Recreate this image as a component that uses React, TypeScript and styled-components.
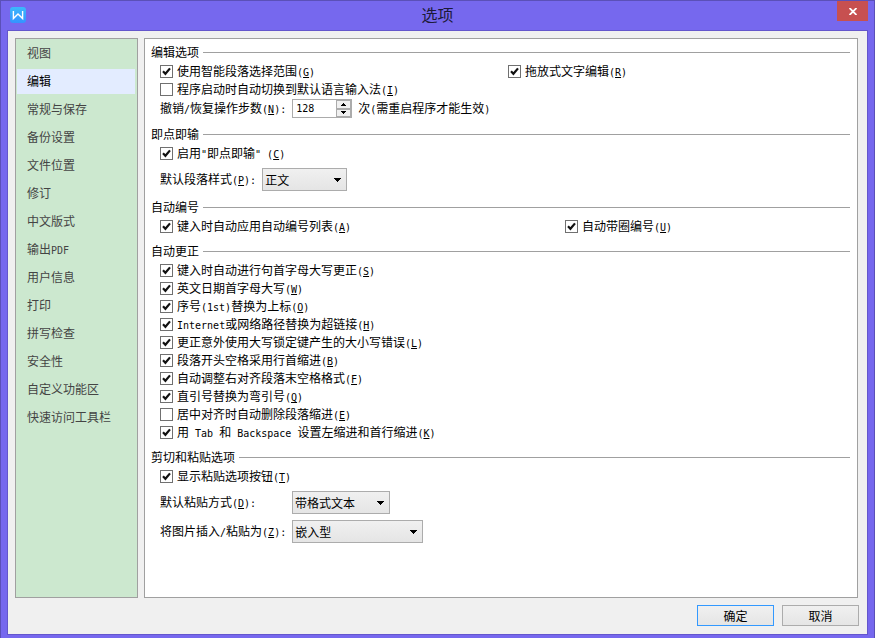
import React, { useId, useState } from "react";
import styled, { createGlobalStyle } from "styled-components";

const cjk = `"Noto Sans CJK SC", "Noto Sans", sans-serif`;
const mono = `"DejaVu Sans Mono", "Liberation Mono", monospace`;
const line = "#a0a0a0";

const GlobalStyle = createGlobalStyle`
  * { box-sizing: border-box; }
  body { margin: 0; color: #000; font-family: ${cjk}; font-size: 12px; line-height: 15px; }
  button, input, select { font: inherit; color: inherit; }
`;

const Window = styled.div`
  display: flex;
  flex-direction: column;
  min-height: 100vh;
  padding: 0 6px 3px;
  background: #7668ee;
  border: 1px solid #5b50b8;
  border-bottom: 0;
`;

const TitleBar = styled.header`
  display: grid;
  grid-template-columns: 31px 1fr 31px;
  height: 29px;
`;

const Logo = styled.svg`
  width: 16px;
  height: 16px;
  margin: 6px 3px;
`;

const Title = styled.h1`
  margin: 0;
  color: #1c1a38;
  font-size: 16px;
  font-weight: 400;
  line-height: 26px;
  text-align: center;
`;

const CloseButton = styled.button`
  display: grid;
  place-items: center;
  width: 31px;
  height: 20px;
  padding: 0;
  background: #c75050;
  border: 0;
`;

const Client = styled.div`
  display: flex;
  flex: 1;
  flex-direction: column;
  padding: 7px 9px 8px 7px;
  background: #f0f0f0;
  border: 1px solid #6456cc;
`;

const Body = styled.div`
  display: flex;
  flex: 1;
  gap: 6px;
`;

const Sidebar = styled.nav`
  display: flex;
  flex: 0 0 123px;
  flex-direction: column;
  gap: 3px;
  padding: 2px 2px 2px 1px;
  background: #cce8cf;
  border: 1px solid ${line};
`;

const NavItem = styled.button<{ $active: boolean }>`
  display: flex;
  align-items: center;
  height: 25px;
  padding: 0 10px;
  color: ${(p) => (p.$active ? "#000" : "#444")};
  white-space: nowrap;
  background: ${(p) => (p.$active ? "#e3ecff" : "transparent")};
  border: 0;
`;

const Panel = styled.main`
  display: flex;
  flex: 1;
  flex-direction: column;
  gap: 8px;
  padding: 5px 7px 5px 6px;
  background: #fff;
  border: 1px solid ${line};
`;

const Section = styled.section`
  display: flex;
  flex-direction: column;
  gap: 2px;
`;

const Heading = styled.h2`
  display: flex;
  gap: 4px;
  align-items: center;
  margin: 0;
  font-size: 12px;
  font-weight: 400;

  &::after {
    flex: 1;
    height: 1px;
    background: ${line};
    content: "";
  }
`;

const Rows = styled.div<{ $gap?: number }>`
  display: flex;
  flex-direction: column;
  gap: ${(p) => p.$gap ?? 0}px;
  padding-left: 9px;
`;

const Columns = styled.div<{ $split: string }>`
  display: grid;
  grid-template-columns: ${(p) => p.$split};
`;

const CheckLabel = styled.label`
  display: flex;
  gap: 4px;
  align-items: center;
  width: fit-content;
  height: 17px;
`;

const CheckMark = styled.span`
  display: grid;
  width: 13px;
  height: 13px;

  > * { grid-area: 1 / 1; }
  > svg { pointer-events: none; visibility: hidden; }
  > input:checked + svg { visibility: visible; }
`;

const CheckInput = styled.input`
  width: 13px;
  height: 13px;
  margin: 0;
  appearance: none;
  background: #fff;
  border: 1px solid #707070;
`;

const Field = styled.div`
  display: flex;
  gap: 6px;
  align-items: center;
`;

const FieldLabel = styled.label<{ $wide?: boolean }>`
  display: flex;
  min-width: ${(p) => (p.$wide ? "126px" : "96px")};
`;

const TextRun = styled.span`
  display: block;
  padding-bottom: 2px;
  white-space: pre;
`;

const Latin = styled.span`
  font-family: ${mono};
  font-size: 10px;
  line-height: 1;
`;

const Spinner = styled.div`
  display: flex;
  width: 60px;
  height: 19px;
  background: #fff;
  border: 1px solid #ababab;
`;

const SpinInput = styled.input`
  flex: 1;
  min-width: 0;
  padding: 0 3px;
  font-family: ${mono};
  font-size: 10px;
  background: transparent;
  border: 0;
`;

const SpinButtons = styled.div`
  display: grid;
  grid-template-rows: 1fr 1fr;
  width: 15px;
`;

const SpinButton = styled.button`
  display: grid;
  place-items: center;
  padding: 0;
  background: #f0f0f0;
  border: 1px solid #ababab;
`;

const SelectBox = styled.div<{ $width: number }>`
  display: grid;
  align-items: center;
  width: ${(p) => p.$width}px;
  height: 23px;

  > * { grid-area: 1 / 1; }
  > svg { justify-self: end; margin-right: 6px; pointer-events: none; }
`;

const Select = styled.select`
  width: 100%;
  height: 23px;
  padding: 0 18px 0 2px;
  appearance: none;
  background: linear-gradient(#f0f0f0, #e5e5e5);
  border: 1px solid #acacac;
  border-radius: 0;
`;

const Footer = styled.footer`
  display: flex;
  gap: 8px;
  justify-content: flex-end;
  margin: 7px -1px 0 0;
`;

const PushButton = styled.button<{ $primary?: boolean }>`
  width: 77px;
  height: 21px;
  padding: 0;
  background: linear-gradient(#f0f0f0, #e5e5e5);
  border: 1px solid ${(p) => (p.$primary ? "#3399ff" : "#acacac")};
`;

/** Sets runs of Latin text in the half-width face; a `_` precedes the access key. */
function Text({ children }: { children: string }) {
  return (
    <TextRun>
      {children.split(/([\x20-\x7e]+)/).map((run, i) => {
        if (i % 2 === 0) return run;
        const [before, after] = run.split("_");
        return (
          <Latin key={i}>
            {before}
            {after && <u>{after[0]}</u>}
            {after && after.slice(1)}
          </Latin>
        );
      })}
    </TextRun>
  );
}

function Check({ text, off }: { text: string; off?: boolean }) {
  return (
    <CheckLabel>
      <CheckMark>
        <CheckInput type="checkbox" defaultChecked={!off} />
        <svg width="13" height="13" viewBox="0 0 13 13" aria-hidden="true">
          <path d="M3 6.3 5.4 8.8 10 3.4" fill="none" stroke="#111" strokeWidth="2.2" />
        </svg>
      </CheckMark>
      <Text>{text}</Text>
    </CheckLabel>
  );
}

function Choice({ label, value, width, wide }: { label: string; value: string; width: number; wide?: boolean }) {
  const id = useId();
  return (
    <Field>
      <FieldLabel htmlFor={id} $wide={wide}>
        <Text>{label}</Text>
      </FieldLabel>
      <SelectBox $width={width}>
        <Select id={id}>
          <option>{value}</option>
        </Select>
        <svg width="7" height="4" viewBox="0 0 7 4" shapeRendering="crispEdges" aria-hidden="true">
          <path d="M0 0h7v1H6v1H5v1H4v1H3V3H2V2H1V1H0z" />
        </svg>
      </SelectBox>
    </Field>
  );
}

function StepCount() {
  const id = useId();
  const [steps, setSteps] = useState(128);
  return (
    <Field>
      <FieldLabel htmlFor={id} $wide>
        <Text>撤销/恢复操作步数(_N):</Text>
      </FieldLabel>
      <Spinner>
        <SpinInput id={id} value={steps} onChange={(e) => setSteps(Number(e.target.value) || 0)} />
        <SpinButtons>
          <SpinButton aria-label="增加" onClick={() => setSteps(steps + 1)}>
            <svg width="5" height="3" viewBox="0 0 5 3" shapeRendering="crispEdges">
              <path d="M2 0h1v1h1v1h1v1H0V2h1V1h1z" />
            </svg>
          </SpinButton>
          <SpinButton aria-label="减少" onClick={() => setSteps(steps - 1)}>
            <svg width="5" height="3" viewBox="0 0 5 3" shapeRendering="crispEdges">
              <path d="M0 0h5v1H4v1H3v1H2V2H1V1H0z" />
            </svg>
          </SpinButton>
        </SpinButtons>
      </Spinner>
      <Text>次(需重启程序才能生效)</Text>
    </Field>
  );
}

const pages = [
  "视图", "编辑", "常规与保存", "备份设置", "文件位置", "修订", "中文版式",
  "输出PDF", "用户信息", "打印", "拼写检查", "安全性", "自定义功能区", "快速访问工具栏",
];

const corrections = [
  { text: "键入时自动进行句首字母大写更正(_S)" },
  { text: "英文日期首字母大写(_W)" },
  { text: "序号(1st)替换为上标(_O)" },
  { text: "Internet或网络路径替换为超链接(_H)" },
  { text: "更正意外使用大写锁定键产生的大小写错误(_L)" },
  { text: "段落开头空格采用行首缩进(_B)" },
  { text: "自动调整右对齐段落末空格格式(_F)" },
  { text: "直引号替换为弯引号(_Q)" },
  { text: "居中对齐时自动删除段落缩进(_E)", off: true },
  { text: "用 Tab 和 Backspace 设置左缩进和首行缩进(_K)" },
];

export default function App() {
  const [page, setPage] = useState("编辑");
  return (
    <>
      <GlobalStyle />
      <Window>
        <TitleBar>
          <Logo viewBox="0 0 16 16" aria-hidden="true">
            <defs>
              <linearGradient id="logo-fill" x1="0" y1="0" x2="0" y2="1">
                <stop offset="0" stopColor="#3cb8fb" />
                <stop offset="1" stopColor="#3493ff" />
              </linearGradient>
            </defs>
            <rect width="16" height="16" rx="3" fill="url(#logo-fill)" />
            <path d="M3.4 4v7.6L8 7l4.6 4.6V4" fill="none" stroke="#fff" strokeWidth="1.4" />
          </Logo>
          <Title>选项</Title>
          <CloseButton aria-label="关闭">
            <svg width="8" height="7" viewBox="0 0 8 7">
              <path d="M.5 0 7.5 7M7.5 0 .5 7" stroke="#fff" strokeWidth="1.8" />
            </svg>
          </CloseButton>
        </TitleBar>
        <Client>
          <Body>
            <Sidebar>
              {pages.map((name) => (
                <NavItem key={name} $active={name === page} onClick={() => setPage(name)}>
                  <Text>{name}</Text>
                </NavItem>
              ))}
            </Sidebar>
            <Panel>
              <Section>
                <Heading><Text>编辑选项</Text></Heading>
                <Rows $gap={1}>
                  <Columns $split="348fr 342fr">
                    <Check text="使用智能段落选择范围(_G)" />
                    <Check text="拖放式文字编辑(_R)" />
                  </Columns>
                  <Check text="程序启动时自动切换到默认语言输入法(_I)" off />
                  <StepCount />
                </Rows>
              </Section>
              <Section>
                <Heading><Text>即点即输</Text></Heading>
                <Rows $gap={6}>
                  <Check text={'启用"即点即输" (_C)'} />
                  <Choice label="默认段落样式(_P):" value="正文" width={85} />
                </Rows>
              </Section>
              <Section>
                <Heading><Text>自动编号</Text></Heading>
                <Rows>
                  <Columns $split="405fr 285fr">
                    <Check text="键入时自动应用自动编号列表(_A)" />
                    <Check text="自动带圈编号(_U)" />
                  </Columns>
                </Rows>
              </Section>
              <Section>
                <Heading><Text>自动更正</Text></Heading>
                <Rows $gap={1}>
                  {corrections.map((c) => (
                    <Check key={c.text} {...c} />
                  ))}
                </Rows>
              </Section>
              <Section>
                <Heading><Text>剪切和粘贴选项</Text></Heading>
                <Rows $gap={6}>
                  <Check text="显示粘贴选项按钮(_T)" />
                  <Choice label="默认粘贴方式(_D):" value="带格式文本" width={98} wide />
                  <Choice label="将图片插入/粘贴为(_Z):" value="嵌入型" width={131} wide />
                </Rows>
              </Section>
            </Panel>
          </Body>
          <Footer>
            <PushButton $primary>确定</PushButton>
            <PushButton>取消</PushButton>
          </Footer>
        </Client>
      </Window>
    </>
  );
}
